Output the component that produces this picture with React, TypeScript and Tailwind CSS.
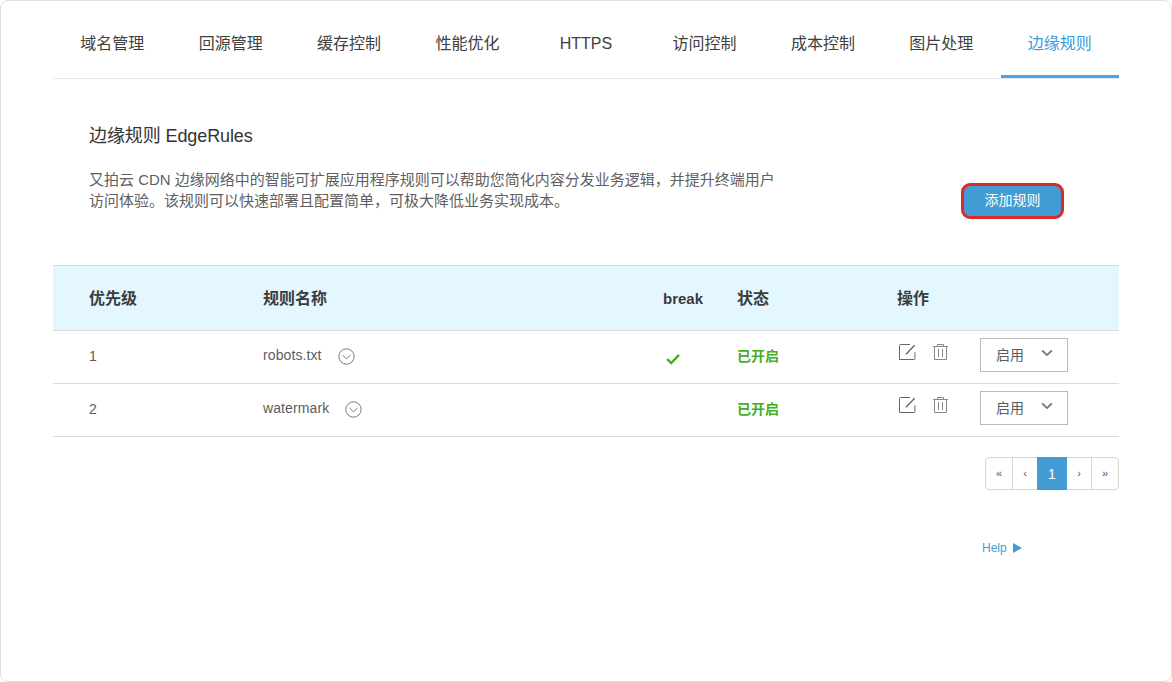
import { useState } from 'react';

// ── Data ─────────────────────────────────────────────────────────────────────

interface Rule {
    priority: number;
    name: string;
    isBreak: boolean;
    status: string;
}

const TABS = ['域名管理', '回源管理', '缓存控制', '性能优化', 'HTTPS', '访问控制', '成本控制', '图片处理', '边缘规则'];

const RULES: Rule[] = [
    { priority: 1, name: 'robots.txt', isBreak: true, status: '已开启' },
    { priority: 2, name: 'watermark', isBreak: false, status: '已开启' },
];

const COLUMNS = 'grid grid-cols-[174px_400px_74px_160px_1fr] pl-9';

// ── Icons ────────────────────────────────────────────────────────────────────

function ExpandIcon() {
    return (
        <svg className="w-[17px] h-[17px]" viewBox="0 0 17 17" fill="none" stroke="#6b6b6b">
            <circle cx="8.5" cy="8.5" r="7.7" strokeWidth="0.9" />
            <path d="M4.5 7l4 3.8L12.5 7" strokeWidth="0.9" />
        </svg>
    );
}

function CheckIcon() {
    return (
        <svg className="w-[14px] h-[12px]" viewBox="0 0 14 12" fill="none" stroke="#45ae22" strokeWidth="2.4">
            <path d="M1.2 6l4 4L13 1.8" />
        </svg>
    );
}

function EditIcon() {
    return (
        <svg className="w-[17px] h-[17px]" viewBox="0 0 17 17" fill="none" stroke="#666" strokeWidth="1">
            <path d="M11 .5H1.5a1 1 0 0 0-1 1v14h14.5a.9.9 0 0 0 .9-.9V8.2" />
            <path d="M7 10.2L15.6 1.3" strokeWidth="1.4" />
        </svg>
    );
}

function TrashIcon() {
    return (
        <svg className="w-[15px] h-[17px]" viewBox="0 0 15 17" fill="none" stroke="#888" strokeWidth="1">
            <path d="M0 2.5h15M4.5 2.5v-2h6v2M1.5 2.5v13h12v-13" />
            <path d="M5.5 5v8M9.5 5v8" />
        </svg>
    );
}

function ArrowIcon() {
    return (
        <svg className="w-[12px] h-[8px]" viewBox="0 0 12 8" fill="none" stroke="#777" strokeWidth="1.8">
            <path d="M1.2 1.5L6 6.1l4.8-4.6" />
        </svg>
    );
}

// ── Table row ────────────────────────────────────────────────────────────────

function RuleRow({ rule }: { rule: Rule }) {
    return (
        <div className={`${COLUMNS} h-[53px] border-b border-[#dcdcdc] text-sm leading-5 text-[#5c5c5c]`}>
            <span className="pt-[15px]">{rule.priority}</span>
            <div className="flex items-start pt-[14px]">
                <span className="tracking-[0.1px]">{rule.name}</span>
                <button className="ml-4 mt-[3px]"><ExpandIcon /></button>
            </div>
            <div className="pl-[3px] pt-[22px]">{rule.isBreak && <CheckIcon />}</div>
            <span className="pt-[15px] font-bold text-[#45ae22]">{rule.status}</span>
            <div className="flex items-start pl-[2px]">
                <button className="mt-[13px]"><EditIcon /></button>
                <button className="ml-[17px] mt-[13px]"><TrashIcon /></button>
                <button className="ml-[32px] mt-[7px] flex h-[34px] w-[88px] items-center justify-between border border-[#bbb] pl-[15px] pr-[14px]">
                    <span>启用</span>
                    <span className="-mt-[5px]"><ArrowIcon /></span>
                </button>
            </div>
        </div>
    );
}

// ── Page ─────────────────────────────────────────────────────────────────────

export default function App() {
    const [activeTab, setActiveTab] = useState('边缘规则');

    return (
        <div className="h-[682px] w-[1172px] rounded-lg border border-[#dfdfdf] bg-white px-[52px] font-['Liberation_Sans','Noto_Sans_CJK_SC',sans-serif]">
            <nav className="grid h-[78px] grid-cols-9 border-b border-[#e6e6ec]">
                {TABS.map(tab => (
                    <button
                        key={tab}
                        onClick={() => setActiveTab(tab)}
                        className={`border-b-[3px] pb-[5px] pt-[17px] text-base leading-[52px] ${
                            activeTab === tab
                                ? 'border-[#4ea3e6] text-[#3b99e0]'
                                : 'border-transparent text-[#404040]'
                        }`}
                    >
                        {tab}
                    </button>
                ))}
            </nav>

            <section className="flex h-[186px] justify-between pl-9 pr-[55px]">
                <div className="pt-[44px]">
                    <h1 className="text-[18px] leading-[26px] tracking-[-0.1px] text-[#333]">边缘规则 EdgeRules</h1>
                    <p className="mt-[20px] w-[690px] text-[15px] leading-[21px] text-[#606060]">
                        又拍云 CDN 边缘网络中的智能可扩展应用程序规则可以帮助您简化内容分发业务逻辑，并提升终端用户
                        <br />
                        访问体验。该规则可以快速部署且配置简单，可极大降低业务实现成本。
                    </p>
                </div>
                <button className="mt-[104px] h-[36px] w-[103px] rounded-[9px] border-[3px] border-[#dd2a25] bg-[#429bd3] pb-[2px] text-sm text-white">
                    添加规则
                </button>
            </section>

            <section>
                <div className={`${COLUMNS} h-[66px] items-center border-y border-[#dcdcdc] bg-[#e4f7ff] pt-[2px] text-base font-bold text-[#3c3c3c]`}>
                    <span>优先级</span>
                    <span>规则名称</span>
                    <span className="text-[15px]">break</span>
                    <span>状态</span>
                    <span>操作</span>
                </div>
                {RULES.map(rule => <RuleRow key={rule.priority} rule={rule} />)}
            </section>

            <div className="mt-5 flex justify-end">
                <div className="flex h-[33px] rounded border border-[#d6d6d6] text-[11px] text-[#555]">
                    <button className="w-[27px] border-r border-[#d6d6d6]">«</button>
                    <button className="w-[24px]">‹</button>
                    <button className="-my-px w-[30px] bg-[#429bd3] text-sm text-white">1</button>
                    <button className="w-[25px] border-r border-[#d6d6d6]">›</button>
                    <button className="w-[26px]">»</button>
                </div>
            </div>

            <a className="ml-[929px] mt-[49px] flex items-center gap-[6px] text-xs leading-[18px] text-[#429bd3]">
                Help
                <svg className="h-[10px] w-[9px]" viewBox="0 0 9 10" fill="#429bd3">
                    <path d="M0 0l9 5-9 5z" />
                </svg>
            </a>
        </div>
    );
}
